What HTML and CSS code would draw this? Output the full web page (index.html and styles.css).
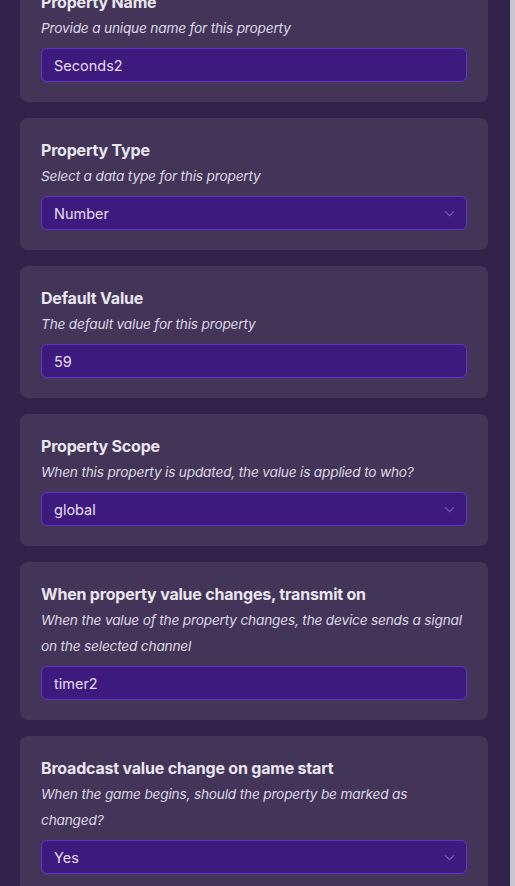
FILE: index.html
```html
<!DOCTYPE html>
<html>
<head>
<meta charset="utf-8">
<link rel="stylesheet" href="styles.css">
</head>
<body>
<div class="page">
  <main class="list">
    <section class="card">
      <h3 class="title">Property Name</h3>
      <p class="desc">Provide a unique name for this property</p>
      <div class="field">Seconds2</div>
    </section>
    <section class="card">
      <h3 class="title">Property Type</h3>
      <p class="desc">Select a data type for this property</p>
      <div class="field select">Number<svg class="chev" viewBox="0 0 12 8"><path d="M1 1.5 L6 6.5 L11 1.5"/></svg></div>
    </section>
    <section class="card">
      <h3 class="title">Default Value</h3>
      <p class="desc">The default value for this property</p>
      <div class="field">59</div>
    </section>
    <section class="card">
      <h3 class="title">Property Scope</h3>
      <p class="desc">When this property is updated, the value is applied to who?</p>
      <div class="field select">global<svg class="chev" viewBox="0 0 12 8"><path d="M1 1.5 L6 6.5 L11 1.5"/></svg></div>
    </section>
    <section class="card">
      <h3 class="title">When property value changes, transmit on</h3>
      <p class="desc">When the value of the property changes, the device sends a signal on the selected channel</p>
      <div class="field">timer2</div>
    </section>
    <section class="card">
      <h3 class="title">Broadcast value change on game start</h3>
      <p class="desc">When the game begins, should the property be marked as changed?</p>
      <div class="field select">Yes<svg class="chev" viewBox="0 0 12 8"><path d="M1 1.5 L6 6.5 L11 1.5"/></svg></div>
    </section>
  </main>
  <div class="scrollbar"></div>
</div>
</body>
</html>
```
FILE: styles.css
```css
html, body {
  margin: 0;
  padding: 0;
  height: 100%;
  overflow: hidden;
  background: #32234a;
  font-family: Inter, "Noto Sans", sans-serif;
}
.page {
  display: flex;
  height: 886px;
}
.list {
  flex: 1;
  display: flex;
  flex-direction: column;
  gap: 16px;
  padding: 0 22px 0 20px;
  margin-top: -30px;
}
.scrollbar {
  width: 5px;
  flex: none;
  background: #c9c5ce;
}
.card {
  background: #433558;
  border-radius: 8px;
  padding: 20px 21px 20px;
}
.title {
  margin: 0;
  font-size: 16px;
  line-height: 24px;
  font-weight: 700;
  color: #e9e5ef;
  letter-spacing: -0.2px;
}
.desc {
  margin: 1px 0 7px;
  font-size: 13.7px;
  line-height: 26px;
  font-style: italic;
  color: #ddd7e6;
  letter-spacing: -0.2px;
}
.field {
  box-sizing: border-box;
  height: 34px;
  display: flex;
  align-items: center;
  justify-content: space-between;
  padding: 0 11px 0 12px;
  background: #3d1a7e;
  border: 1px solid #6333c9;
  border-radius: 6px;
  color: #e6def4;
  font-size: 14.5px;
}
.chev {
  width: 11px;
  height: 7px;
  fill: none;
  stroke: #7b5bb8;
  stroke-width: 1.3;
}
```
